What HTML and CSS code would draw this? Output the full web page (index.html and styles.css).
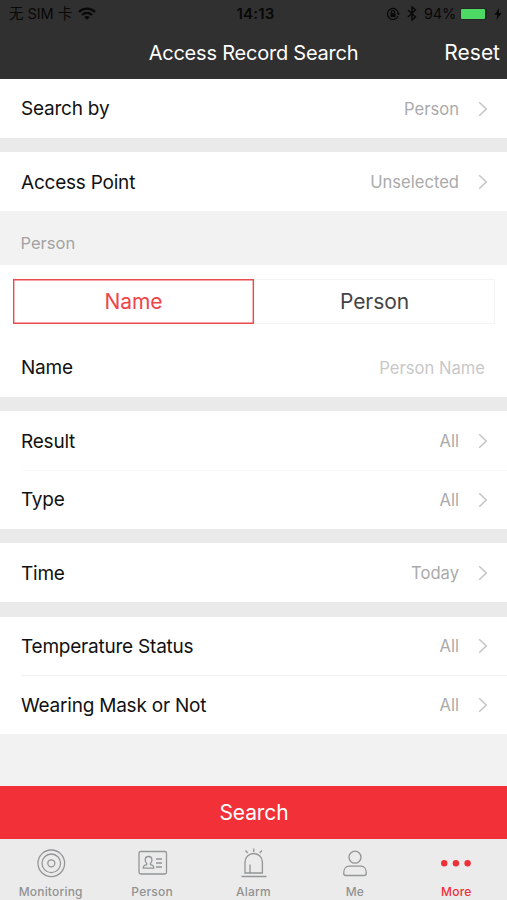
FILE: index.html
```html
<!DOCTYPE html>
<html lang="en">
<head>
<meta charset="utf-8">
<title>Access Record Search</title>
<link rel="stylesheet" href="styles.css">
</head>
<body>
<svg class="defs" aria-hidden="true">
  <symbol id="chevron" viewBox="0 0 10 16"><path d="M1.2 1.2 8.3 8 1.2 14.8" fill="none" stroke="currentColor" stroke-width="1.5"/></symbol>
</svg>
<div class="app">
  <header class="header">
    <div class="status">
      <div class="status-left">
        <span class="carrier">无 SIM 卡</span>
        <svg class="wifi" viewBox="0 0 18 13" fill="none" stroke="currentColor" stroke-width="2.3"><path d="M1 5C5.4.6 12.6.6 17 5M4 8c2.8-2.8 7.2-2.8 10 0"/><path d="M9 12.8 6.3 10.1c1.5-1.5 3.9-1.5 5.4 0z" fill="currentColor" stroke="none"/></svg>
      </div>
      <span class="clock">14:13</span>
      <div class="status-right">
        <svg class="lock" viewBox="0 0 14 14" fill="none" stroke="currentColor" stroke-width="1.2"><path d="M12 9.3A5.5 5.5 0 1 1 12.5 7"/><path d="m10.7 6.3 1.8 2 1.5-2z" fill="currentColor" stroke="none"/><path d="M5.4 6.5V5.3a1.6 1.6 0 0 1 3.2 0v1.2"/><rect x="4.4" y="6.2" width="5.2" height="3.8" rx=".6" fill="currentColor" stroke="none"/></svg>
        <svg class="bluetooth" viewBox="0 0 10 15" fill="none" stroke="currentColor" stroke-width="1.4"><path d="m1 4 7.5 7L5 14V1l3.5 3L1 11"/></svg>
        <span class="percent">94%</span>
        <span class="battery"><span class="charge"></span></span>
        <svg class="bolt" viewBox="0 0 8 12" fill="currentColor"><path d="M5.3 0 .4 6.8h2.9L2.5 12l5-7.1H4.6z"/></svg>
      </div>
    </div>
    <div class="nav">
      <h1 class="title">Access Record Search</h1>
      <span class="reset">Reset</span>
    </div>
  </header>
  <main class="main">
    <section class="group">
      <div class="row"><span class="label">Search by</span><span class="value">Person</span><svg class="chev"><use href="#chevron"/></svg></div>
    </section>
    <section class="group">
      <div class="row"><span class="label">Access Point</span><span class="value">Unselected</span><svg class="chev"><use href="#chevron"/></svg></div>
    </section>
    <h2 class="section-title">Person</h2>
    <section class="group">
      <div class="tabs"><span class="tab tab-active">Name</span><span class="tab">Person</span></div>
      <div class="row"><span class="label">Name</span><span class="value placeholder">Person Name</span></div>
    </section>
    <section class="group">
      <div class="row"><span class="label">Result</span><span class="value">All</span><svg class="chev"><use href="#chevron"/></svg></div>
      <div class="row divided faint"><span class="label">Type</span><span class="value">All</span><svg class="chev"><use href="#chevron"/></svg></div>
    </section>
    <section class="group">
      <div class="row"><span class="label">Time</span><span class="value">Today</span><svg class="chev"><use href="#chevron"/></svg></div>
    </section>
    <section class="group">
      <div class="row"><span class="label">Temperature Status</span><span class="value">All</span><svg class="chev"><use href="#chevron"/></svg></div>
      <div class="row divided"><span class="label">Wearing Mask or Not</span><span class="value">All</span><svg class="chev"><use href="#chevron"/></svg></div>
    </section>
    <div class="filler"></div>
  </main>
  <div class="search">Search</div>
  <nav class="tabbar">
    <div class="item"><svg class="icon" viewBox="0 0 32 32"><circle cx="16.3" cy="16.3" r="13.3"/><circle cx="16.3" cy="16.3" r="9.3"/><circle cx="16.3" cy="16.3" r="3.5"/></svg><span>Monitoring</span></div>
    <div class="item"><svg class="icon" viewBox="0 0 32 32"><rect x="3" y="4.5" width="27.500" height="22.500" rx="1.800"/><path d="M12.500 9.500c2.200 0 3.400 1.500 3.400 3.500 0 1.500-.6 2.800-1.500 3.500v1l2.500 1.200c.7.4.9 1.200.9 2.400H7.300c0-1.200.2-2 .9-2.400l2.500-1.200v-1c-.9-.7-1.500-2-1.500-3.500 0-2 1.100-3.500 3.300-3.500zM20 12h6M20 16h6M20 20h6"/></svg><span>Person</span></div>
    <div class="item"><svg class="icon" viewBox="0 0 32 32"><path d="M4.500 29.500h25M8 26V15a8.700 8.500 0 0 1 17.400 0v11zM13 25.500v-8M16.700 1.500V5M8.500 3.500 10.700 6M24.900 3.500 22.700 6"/></svg><span>Alarm</span></div>
    <div class="item"><svg class="icon" viewBox="0 0 32 32"><circle cx="16" cy="10.200" r="6"/><path d="M10 19.200h12c3.500 0 5.300 3.500 5.300 7 0 1.500-.8 2.300-2.300 2.300H7c-1.500 0-2.300-.8-2.300-2.300 0-3.500 1.800-7 5.300-7z"/></svg><span>Me</span></div>
    <div class="item item-active"><svg class="icon" viewBox="0 0 32 32"><circle cx="4.200" cy="16.300" r="3.200"/><circle cx="15.900" cy="16.300" r="3.200"/><circle cx="27.600" cy="16.300" r="3.200"/></svg><span>More</span></div>
  </nav>
</div>
</body>
</html>
```

FILE: styles.css
```css
* { box-sizing: border-box; }
body { margin: 0; font-family: Inter, "Noto Sans CJK SC", sans-serif; background: #f2f2f2; }
.defs { position: absolute; width: 0; height: 0; }
.app { display: flex; flex-direction: column; width: 507px; height: 900px; overflow: hidden; }
.header { height: 79px; flex: none; background: #303030; color: #fff; }
.status { display: grid; grid-template-columns: 1fr auto 1fr; align-items: center; height: 27px; padding: 0 5px 0 9px; color: #080808; font-size: 14.5px; }
.status-left, .status-right { display: flex; align-items: center; }
.status-right { justify-content: flex-end; }
.carrier { line-height: 20px; white-space: nowrap; letter-spacing: -.05px; }
.wifi { width: 18px; height: 13px; margin-left: 6px; }
.clock { font-weight: 600; font-size: 15px; letter-spacing: .15px; }
.lock { width: 14px; height: 14px; }
.bluetooth { width: 10px; height: 15px; margin: 0 7px; }
.percent { letter-spacing: -.2px; }
.battery { width: 27px; height: 12px; margin: 0 7px 0 4px; padding: 1px 2px 1px 1px; background: #272727; border-radius: 2px; }
.charge { display: block; width: 24px; height: 10px; border-radius: 1px; background: #4cd964; }
.bolt { width: 8px; height: 12px; }
.nav { display: grid; grid-template-columns: 1fr auto 1fr; align-items: center; height: 51px; padding: 0 7px; }
.title { grid-column: 2; margin: 0; font-size: 20px; font-weight: 400; letter-spacing: -.22px; }
.reset { justify-self: end; font-size: 21px; }
.main { display: flex; flex-direction: column; height: 707px; flex: none; background: #eaeaea; }
.group { background: #fff; }
.group + .group { margin-top: 14.7px; }
.row { display: flex; align-items: center; height: 58.6px; padding: 1px 19px 0 21px; }
.label { flex: 1; font-size: 19px; color: #111; letter-spacing: -.22px; }
.value { font-size: 16.6px; color: #aaa; }
.placeholder { margin-right: 3px; color: #c8c8c8; }
.chev { width: 10px; height: 16px; margin-left: 19px; color: #c4c4c4; }
.divided { background: linear-gradient(#f1f1f1, #f1f1f1) 21px 0 / 486px 1px no-repeat; }
.faint { background-image: linear-gradient(#fafafa, #fafafa); }
.section-title { display: flex; align-items: center; height: 54.3px; margin: 0; padding: 10px 21px 0 20.5px; font-size: 16.5px; font-weight: 400; color: #a3a3a3; background: #f2f2f2; }
.tabs { display: grid; grid-template-columns: 1fr 1fr; height: 73px; padding: 14px 12px 14px 13px; }
.tab { display: grid; place-items: center; box-shadow: inset 0 0 0 1px #f3f3f3; font-size: 21px; letter-spacing: -.1px; color: #444; }
.tab-active { box-shadow: inset 0 0 0 1.4px #ea4b50; color: #f04448; }
.filler { flex: 1; background: #f2f2f2; }
.search { display: grid; place-items: center; height: 53px; padding-left: 1px; flex: none; background: #f23037; color: #fff; font-size: 21px; letter-spacing: -.1px; }
.tabbar { display: grid; grid-template-columns: repeat(5, 1fr); height: 61px; flex: none; background: #ebebeb; color: #929292; }
.item { display: flex; flex-direction: column; align-items: center; font-size: 12px; font-weight: 500; line-height: 15px; letter-spacing: .2px; }
.icon { width: 32px; height: 32px; margin: 8px 0 5px; fill: none; stroke: #929696; stroke-width: 1.3; }
.item-active { color: #ef3037; }
.item-active .icon { fill: currentColor; stroke: none; }
```
